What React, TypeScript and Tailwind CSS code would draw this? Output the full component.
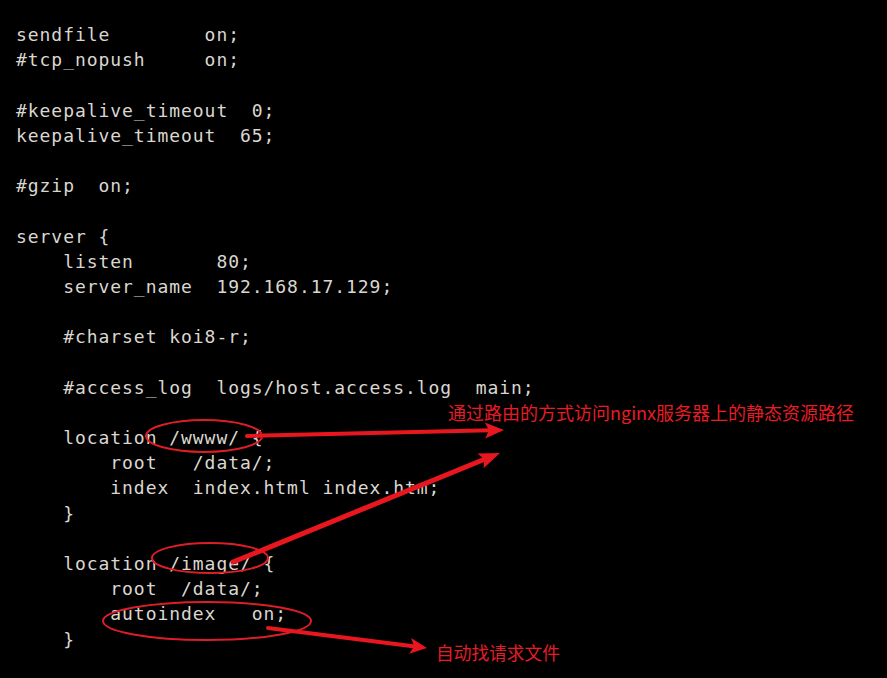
import React from "react";

const lines = [
  "sendfile        on;",
  "#tcp_nopush     on;",
  "",
  "#keepalive_timeout  0;",
  "keepalive_timeout  65;",
  "",
  "#gzip  on;",
  "",
  "server {",
  "    listen       80;",
  "    server_name  192.168.17.129;",
  "",
  "    #charset koi8-r;",
  "",
  "    #access_log  logs/host.access.log  main;",
  "",
  "    location /wwww/ {",
  "        root   /data/;",
  "        index  index.html index.htm;",
  "    }",
  "",
  "    location /image/ {",
  "        root  /data/;",
  "        autoindex   on;",
  "    }",
];

function Arrow({ x1, y1, x2, y2, w = 4, head = 18, half = 8 }: { x1: number; y1: number; x2: number; y2: number; w?: number; head?: number; half?: number }) {
  const dx = x2 - x1;
  const dy = y2 - y1;
  const len = Math.hypot(dx, dy);
  const ux = dx / len;
  const uy = dy / len;
  const bx = x2 - ux * head;
  const by = y2 - uy * head;
  const px = -uy;
  const py = ux;
  const pts = `${x2},${y2} ${bx + px * half},${by + py * half} ${bx + ux * 4},${by + uy * 4} ${bx - px * half},${by - py * half}`;
  return (
    <g>
      <line x1={x1} y1={y1} x2={bx + ux * 5} y2={by + uy * 5} stroke="#e8161f" strokeWidth={w} strokeLinecap="round" />
      <polygon points={pts} fill="#e8161f" />
    </g>
  );
}

export default function App() {
  return (
    <div className="relative w-[887px] h-[678px] bg-black overflow-hidden">
      <div
        className="pt-[22px] pl-[16px] text-[18px] leading-[25.2px] tracking-[0.95px] text-[#dad7d0]"
        style={{ fontFamily: '"DejaVu Sans Mono", "Liberation Mono", monospace' }}
      >
        {lines.map((l, i) => (
          <div key={i} className="whitespace-pre h-[25.2px]">
            {l}
          </div>
        ))}
      </div>

      <svg className="absolute inset-0" width="887" height="678" viewBox="0 0 887 678">
        <ellipse cx="204" cy="436" rx="58" ry="16" fill="none" stroke="#dc1e27" strokeWidth="2" />
        <ellipse cx="210" cy="558" rx="58" ry="15" fill="none" stroke="#dc1e27" strokeWidth="2" />
        <ellipse cx="207" cy="621" rx="104" ry="19" fill="none" stroke="#dc1e27" strokeWidth="2" />
        <Arrow x1={247} y1={436} x2={504} y2={430} w={4} head={19} half={8} />
        <Arrow x1={233} y1={562} x2={500} y2={453} w={5} head={21} half={8} />
        <Arrow x1={268} y1={628} x2={427} y2={648} w={4} head={17} half={8} />
      </svg>

      <div
        className="absolute left-[448px] top-[400px] text-[18px] leading-[24px] text-[#e41d26] whitespace-nowrap"
        style={{ fontFamily: '"Noto Sans CJK SC", "Noto Sans", sans-serif' }}
      >
        通过路由的方式访问nginx服务器上的静态资源路径
      </div>
      <div
        className="absolute left-[436px] top-[640px] text-[17.7px] leading-[24px] text-[#e41d26] whitespace-nowrap"
        style={{ fontFamily: '"Noto Sans CJK SC", "Noto Sans", sans-serif' }}
      >
        自动找请求文件
      </div>
    </div>
  );
}
